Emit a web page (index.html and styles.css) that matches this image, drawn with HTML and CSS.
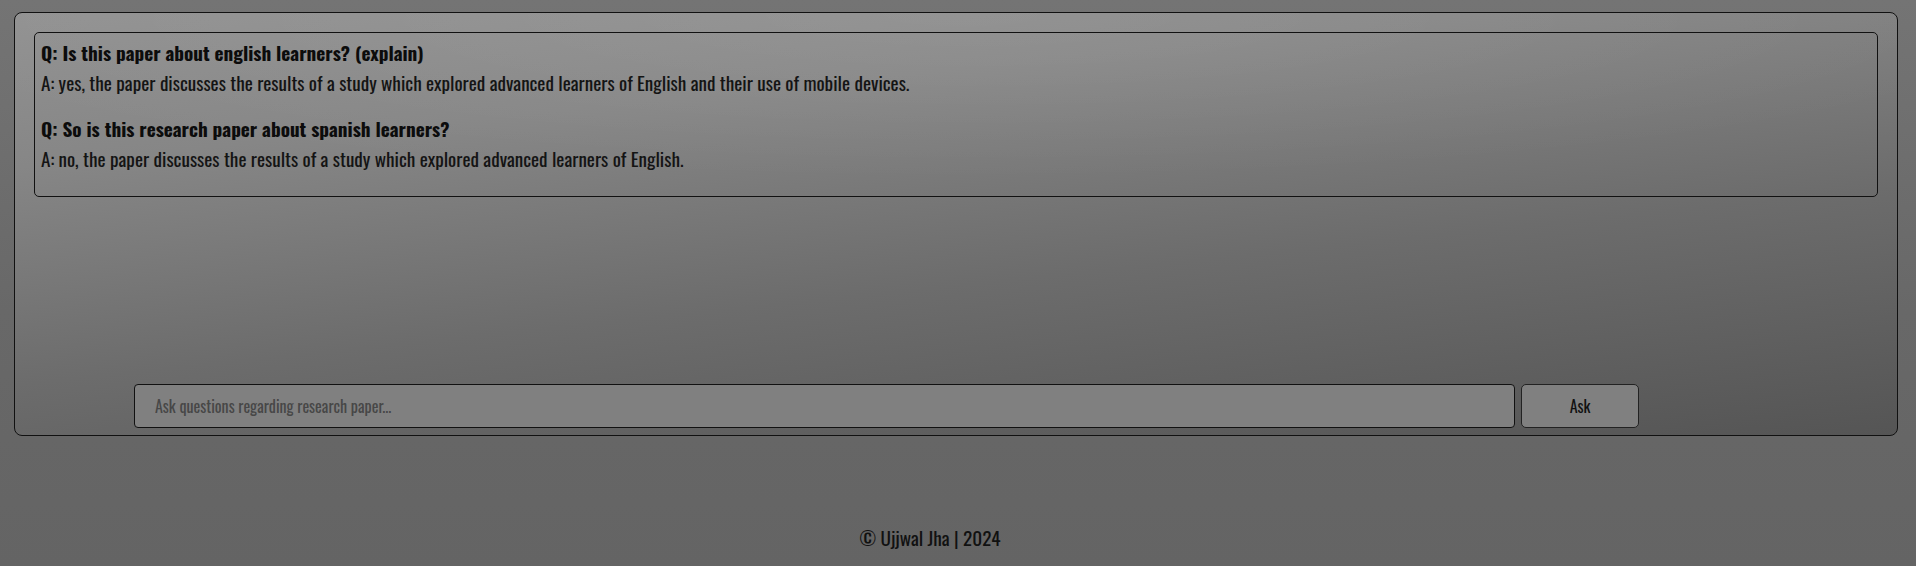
FILE: index.html
```html
<!DOCTYPE html>
<html lang="en">
<head>
<meta charset="utf-8">
<title>Research Paper Q&amp;A</title>
<link rel="stylesheet" href="styles.css">
</head>
<body>
<main class="panel">
  <section class="chat">
    <div class="qa">
      <p class="q">Q: Is this paper about english learners? (explain)</p>
      <p class="a">A: yes, the paper discusses the results of a study which explored advanced learners of English and their use of mobile devices.</p>
    </div>
    <div class="qa">
      <p class="q">Q: So is this research paper about spanish learners?</p>
      <p class="a">A: no, the paper discusses the results of a study which explored advanced learners of English.</p>
    </div>
  </section>
  <form class="ask-form">
    <input class="ask-input" type="text" placeholder="Ask questions regarding research paper...">
    <button class="ask-btn" type="button">Ask</button>
  </form>
</main>
<footer class="footer">© Ujjwal Jha | 2024</footer>
</body>
</html>
```
FILE: styles.css
```css
html {
  height: 100%;
  background: linear-gradient(to bottom, #747474 0%, #686868 55%, #646464 100%);
}
body {
  margin: 0;
  height: 100%;
  font-family: "Oswald", "Open Sans", sans-serif;
  color: #111;
}
.panel {
  box-sizing: border-box;
  margin: 12px 18px 0 14px;
  height: 424px;
  border: 1px solid #111;
  border-radius: 8px;
  padding: 19px 19px 7px 19px;
  display: flex;
  flex-direction: column;
  background:
    radial-gradient(ellipse 60% 40% at 50% 0%, rgba(255,255,255,0.08), rgba(255,255,255,0) 100%),
    linear-gradient(174deg, #929292 0%, #868686 25%, #6c6c6c 60%, #555555 100%);
}
.chat {
  box-sizing: border-box;
  height: 165px;
  border: 1px solid #111;
  border-radius: 5px;
  padding: 7px 6px 3px 6px;
}
.qa {
  margin-bottom: 21px;
}
.q {
  margin: 0;
  font-size: 19.2px;
  line-height: 26px;
  font-weight: 700;
  color: #0c0c0c;
}
.a {
  margin: 5px 0 0;
  font-size: 19.2px;
  line-height: 24px;
  font-weight: 400;
  color: #141414;
}
.ask-form {
  margin-top: auto;
  margin-left: 100px;
  display: flex;
  gap: 6px;
}
.ask-input {
  box-sizing: border-box;
  width: 1381px;
  height: 44px;
  border: 1px solid #111;
  border-radius: 4px;
  background: #808080;
  padding: 0 20px;
  font-family: "Oswald", "Open Sans", sans-serif;
  font-size: 16px;
  font-weight: 400;
  color: #111;
  outline: none;
}
.ask-input::placeholder {
  color: #474747;
}
.ask-btn {
  box-sizing: border-box;
  width: 118px;
  height: 44px;
  border: 1px solid #222;
  border-radius: 5px;
  background: #808080;
  font-family: "Oswald", "Open Sans", sans-serif;
  font-size: 16px;
  font-weight: 400;
  color: #111;
}
.footer {
  margin-top: 89px;
  padding-right: 56px;
  text-align: center;
  font-size: 19.2px;
  line-height: 26px;
  color: #111;
}
```
